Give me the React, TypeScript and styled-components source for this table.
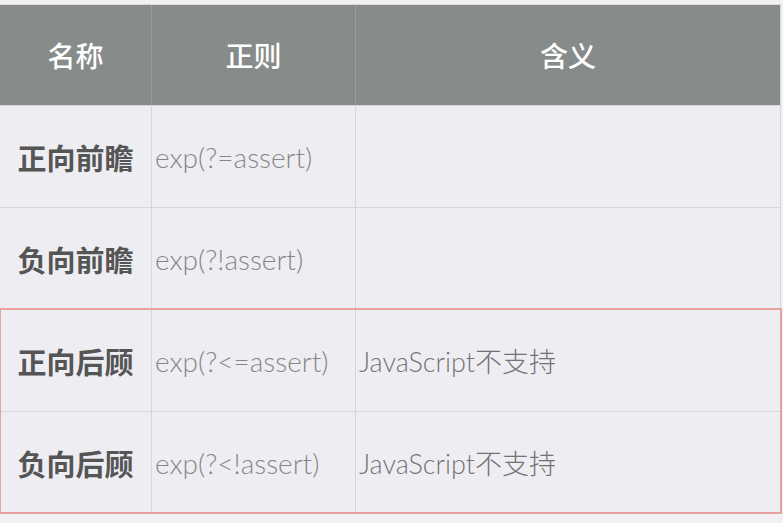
import React from 'react';
import styled, { createGlobalStyle } from 'styled-components';

interface IRule {
  name: string;
  regex: string;
  meaning: string;
}

const RULES: IRule[] = [
  { name: '正向前瞻', regex: 'exp(?=assert)', meaning: '' },
  { name: '负向前瞻', regex: 'exp(?!assert)', meaning: '' },
  { name: '正向后顾', regex: 'exp(?<=assert)', meaning: 'JavaScript不支持' },
  { name: '负向后顾', regex: 'exp(?<!assert)', meaning: 'JavaScript不支持' },
];

const HEADERS = ['名称', '正则', '含义'];

const GlobalStyle = createGlobalStyle`
  html, body {
    margin: 0;
    padding: 0;
    background: #f1f1f4;
    font-family: Lato, "Noto Sans CJK SC", sans-serif;
  }
`;

export default function App() {
  const renderRow = (rule: IRule) => (
    <Row key={rule.name}>
      <NameCell>{rule.name}</NameCell>
      <TextCell $size={28}>{rule.regex}</TextCell>
      <TextCell $size={27} $dark>
        {rule.meaning}
      </TextCell>
    </Row>
  );

  return (
    <>
      <GlobalStyle />
      <Page>
        <Table>
          <HeadRow>
            {HEADERS.map(h => (
              <HeadCell key={h}>{h}</HeadCell>
            ))}
          </HeadRow>
          {RULES.slice(0, 2).map(renderRow)}
          <Highlight>{RULES.slice(2).map(renderRow)}</Highlight>
        </Table>
      </Page>
    </>
  );
}

const Page = styled.div`
  width: 783px;
  height: 523px;
  padding-top: 4px;
  box-sizing: border-box;
  overflow: hidden;
`;

const Table = styled.div`
  width: 780px;
  display: flex;
  flex-direction: column;
  background: #eeeef2;
  border-right: 1px solid #d6d6da;
`;

const HeadRow = styled.div`
  display: grid;
  grid-template-columns: 151px 204px 1fr;
  height: 101px;
  background: #878c8b;
  border-top: 1px solid #dcdcdf;
  box-sizing: border-box;
`;

const HeadCell = styled.div`
  display: flex;
  align-items: center;
  justify-content: center;
  color: #ffffff;
  font-family: "Noto Sans CJK SC", sans-serif;
  font-size: 28px;
  font-weight: 500;
  border-left: 1px solid #9a9e9d;

  &:first-child {
    border-left: none;
  }
`;

const Row = styled.div`
  display: grid;
  grid-template-columns: 151px 204px 1fr;
  height: 102px;
  border-top: 1px solid #d6d6da;
  box-sizing: border-box;
`;

const NameCell = styled.div`
  display: flex;
  align-items: center;
  justify-content: center;
  color: #555556;
  font-family: "Noto Sans CJK SC", sans-serif;
  font-size: 29px;
  font-weight: 700;
`;

const TextCell = styled.div<{ $dark?: boolean; $size: number }>`
  display: flex;
  align-items: center;
  padding-left: 3px;
  border-left: 1px solid #d6d6da;
  color: ${({ $dark }) => ($dark ? '#737375' : '#868688')};
  font-family: Lato, "Noto Sans CJK SC", sans-serif;
  font-size: ${({ $size }) => $size}px;
  font-weight: 300;
  white-space: nowrap;
`;

const Highlight = styled.div`
  display: flex;
  flex-direction: column;
  margin-right: -1px;
  outline: 2px solid #e8a0a0;
  outline-offset: -1px;
`;
